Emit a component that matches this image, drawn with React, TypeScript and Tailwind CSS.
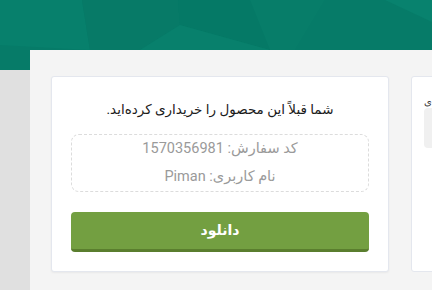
export default function App() {
  return (
    <div className="w-[432px] h-[290px] overflow-hidden bg-[#e0e0e0] font-['Roboto','DejaVu_Sans',sans-serif]">
      {/* Header band with faint polygon pattern */}
      <div className="h-[70px] bg-[#067b68]">
        <svg width="432" height="70" viewBox="0 0 432 70" className="block">
          <polygon points="0,0 82,0 90,50 0,45" fill="#07806c" />
          <polygon points="82,0 178,0 180,25 140,50 90,50" fill="#077a67" />
          <polygon points="178,0 250,0 270,50 180,25" fill="#057966" />
          <polygon points="180,25 270,50 140,50" fill="#08806c" />
          <polygon points="250,0 325,0 295,50 270,50" fill="#077d69" />
          <polygon points="385,0 432,0 432,22" fill="#08826e" />
        </svg>
      </div>

      <div className="-mt-[20px] ml-[30px] h-[240px] bg-[#f4f4f4] pt-[26px] pl-[21px] flex gap-[22px]">
        {/* Main card */}
        <div className="w-[338px] h-[196px] shrink-0 bg-white border border-[#e4e7ee] rounded-[3px] shadow-[0_1px_2px_rgba(0,0,0,0.05)] px-[19px] pt-[20px]" dir="rtl">
          <p className="text-center text-[13.5px] leading-[24px] text-[#1b1b1b]">
            شما قبلاً این محصول را خریداری کرده‌اید.
          </p>
          <div className="mt-[13px] h-[58px] border border-dashed border-[#dcdcdc] rounded-[8px] flex flex-col items-center justify-center gap-[6px] text-[#9a9a9a] text-[14.5px] leading-[22px]">
            <p>کد سفارش: 1570356981</p>
            <p>نام کاربری: Piman</p>
          </div>
          <button className="mt-[20px] w-full h-[40px] bg-[#739f41] border-b-[3px] border-[#5a7e2e] rounded-[4px] text-white text-[14px] font-bold">
            دانلود
          </button>
        </div>

        {/* Side card, clipped at window edge */}
        <div className="w-[120px] h-[196px] shrink-0 bg-white border border-[#e4e7ee] rounded-[3px] pt-[20px] pl-[12px]">
          <div className="text-[10px] leading-[10px] text-[#333]">ی</div>
          <div className="mt-[1px] h-[40px] bg-[#f0f0f0] rounded-[4px]" />
        </div>
      </div>
    </div>
  );
}
